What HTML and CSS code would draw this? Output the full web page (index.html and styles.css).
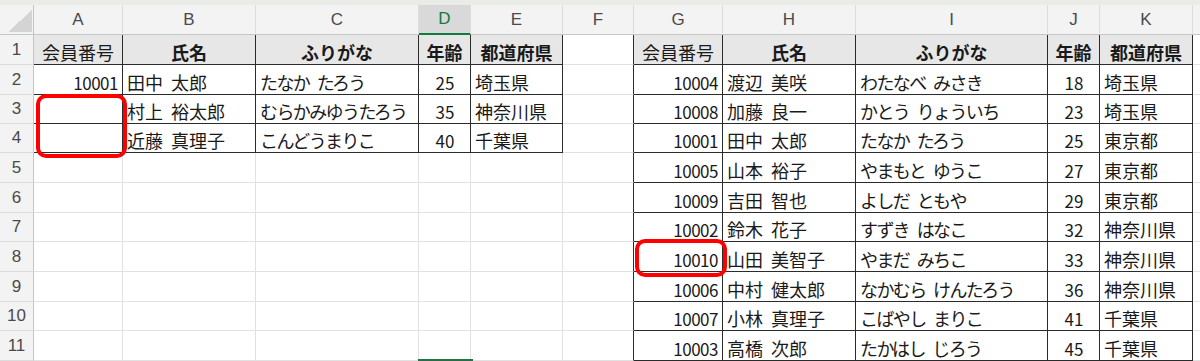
FILE: index.html
```html
<!DOCTYPE html>
<html lang="ja">
<head>
<meta charset="utf-8">
<title>Sheet</title>
<link rel="stylesheet" href="styles.css">
</head>
<body>
<div class="app">
  <div class="strip"></div>
  <div class="sheet">
    <div class="corner"><span class="tri"></span></div>
    <div class="ch">A</div><div class="ch">B</div><div class="ch">C</div><div class="ch sel">D</div><div class="ch">E</div><div class="ch">F</div><div class="ch">G</div><div class="ch">H</div><div class="ch">I</div><div class="ch">J</div><div class="ch">K</div><div class="ch end"></div>

    <div class="rh">1</div>
    <div class="c t th">会員番号</div><div class="c t th b">氏名</div><div class="c t th b">ふりがな</div><div class="c t th b">年齢</div><div class="c t th b">都道府県</div>
    <div class="c lb"></div>
    <div class="c t th">会員番号</div><div class="c t th b">氏名</div><div class="c t th b">ふりがな</div><div class="c t th b">年齢</div><div class="c t th b">都道府県</div>
    <div class="c end"></div>

    <div class="rh">2</div>
    <div class="c t num">10001</div><div class="c t">田中 太郎</div><div class="c t k">たなか たろう</div><div class="c t ctr">25</div><div class="c t">埼玉県</div>
    <div class="c lb"></div>
    <div class="c t num">10004</div><div class="c t">渡辺 美咲</div><div class="c t k">わたなべ みさき</div><div class="c t ctr">18</div><div class="c t">埼玉県</div>
    <div class="c end"></div>

    <div class="rh">3</div>
    <div class="c t num"></div><div class="c t">村上 裕太郎</div><div class="c t k">むらかみゆうたろう</div><div class="c t ctr">35</div><div class="c t">神奈川県</div>
    <div class="c lb"></div>
    <div class="c t num">10008</div><div class="c t">加藤 良一</div><div class="c t k">かとう りょういち</div><div class="c t ctr">23</div><div class="c t">埼玉県</div>
    <div class="c end"></div>

    <div class="rh">4</div>
    <div class="c t num"></div><div class="c t">近藤 真理子</div><div class="c t k">こんどうまりこ</div><div class="c t ctr">40</div><div class="c t">千葉県</div>
    <div class="c lb"></div>
    <div class="c t num">10001</div><div class="c t">田中 太郎</div><div class="c t k">たなか たろう</div><div class="c t ctr">25</div><div class="c t">東京都</div>
    <div class="c end"></div>

    <div class="rh">5</div>
    <div class="c"></div><div class="c"></div><div class="c"></div><div class="c"></div><div class="c"></div>
    <div class="c lb"></div>
    <div class="c t num">10005</div><div class="c t">山本 裕子</div><div class="c t k">やまもと ゆうこ</div><div class="c t ctr">27</div><div class="c t">東京都</div>
    <div class="c end"></div>

    <div class="rh">6</div>
    <div class="c"></div><div class="c"></div><div class="c"></div><div class="c"></div><div class="c"></div>
    <div class="c lb"></div>
    <div class="c t num">10009</div><div class="c t">吉田 智也</div><div class="c t k">よしだ ともや</div><div class="c t ctr">29</div><div class="c t">東京都</div>
    <div class="c end"></div>

    <div class="rh">7</div>
    <div class="c"></div><div class="c"></div><div class="c"></div><div class="c"></div><div class="c"></div>
    <div class="c lb"></div>
    <div class="c t num">10002</div><div class="c t">鈴木 花子</div><div class="c t k">すずき はなこ</div><div class="c t ctr">32</div><div class="c t">神奈川県</div>
    <div class="c end"></div>

    <div class="rh">8</div>
    <div class="c"></div><div class="c"></div><div class="c"></div><div class="c"></div><div class="c"></div>
    <div class="c lb"></div>
    <div class="c t num">10010</div><div class="c t">山田 美智子</div><div class="c t k">やまだ みちこ</div><div class="c t ctr">33</div><div class="c t">神奈川県</div>
    <div class="c end"></div>

    <div class="rh">9</div>
    <div class="c"></div><div class="c"></div><div class="c"></div><div class="c"></div><div class="c"></div>
    <div class="c lb"></div>
    <div class="c t num">10006</div><div class="c t">中村 健太郎</div><div class="c t k">なかむら けんたろう</div><div class="c t ctr">36</div><div class="c t">神奈川県</div>
    <div class="c end"></div>

    <div class="rh">10</div>
    <div class="c"></div><div class="c"></div><div class="c"></div><div class="c"></div><div class="c"></div>
    <div class="c lb"></div>
    <div class="c t num">10007</div><div class="c t">小林 真理子</div><div class="c t k">こばやし まりこ</div><div class="c t ctr">41</div><div class="c t">千葉県</div>
    <div class="c end"></div>

    <div class="rh">11</div>
    <div class="c"></div><div class="c"></div><div class="c"></div><div class="c"></div><div class="c"></div>
    <div class="c lb"></div>
    <div class="c t num">10003</div><div class="c t">高橋 次郎</div><div class="c t k">たかはし じろう</div><div class="c t ctr">45</div><div class="c t">千葉県</div>
    <div class="c end"></div>
  </div>
  <div class="mark mark-a"></div>
  <div class="mark mark-b"></div>
  <div class="active-edge"></div>
</div>
</body>
</html>
```
FILE: styles.css
```css
html, body {
  margin: 0;
  padding: 0;
  background: #ffffff;
}
body {
  font-family: "Noto Sans CJK JP", "Noto Sans", sans-serif;
  color: #1a1a1a;
  overflow: hidden;
}
.app {
  position: relative;
  width: 1200px;
  height: 361px;
  overflow: hidden;
}
.strip {
  height: 5px;
  background: #e9ece7;
}
.sheet {
  display: grid;
  grid-template-columns: 34px 89px 133px 163px 52px 92px 71px 89px 133px 192px 52px 93px 1fr;
  grid-template-rows: 30px 30px 30px 29px 29px 30px 30px 29px 30px 30px 29px 30px;
}
.corner {
  box-sizing: border-box;
  background: #f3f3f3;
  border-right: 1px solid #c6c6c6;
  border-bottom: 1px solid #c6c6c6;
  display: flex;
  justify-content: flex-end;
  align-items: flex-end;
  padding: 0 1px 2px 0;
}
.tri {
  width: 24px;
  height: 22px;
  background: linear-gradient(to bottom right, transparent 50%, #d4d4d4 50%);
}
.ch {
  box-sizing: border-box;
  background: #f3f3f3;
  border-right: 1px solid #dcdcdc;
  border-bottom: 1px solid #c6c6c6;
  display: flex;
  justify-content: center;
  align-items: center;
  font-family: "Liberation Sans", Arial, sans-serif;
  font-size: 17px;
  color: #4a4a4a;
}
.ch.sel {
  background: #d9d9d9;
  color: #107c41;
  border-bottom: 2px solid #107c41;
}
.ch.end {
  border-right: none;
}
.rh {
  box-sizing: border-box;
  background: #f3f3f3;
  border-right: 1px solid #c6c6c6;
  border-bottom: 1px solid #dcdcdc;
  display: flex;
  justify-content: center;
  align-items: center;
  font-family: "Liberation Sans", Arial, sans-serif;
  font-size: 17px;
  color: #4a4a4a;
}
.c {
  box-sizing: border-box;
  border-right: 1px solid #e1e1e1;
  border-bottom: 1px solid #e1e1e1;
  display: flex;
  align-items: flex-end;
  padding: 0 3px 3px 4px;
  font-size: 18px;
  line-height: 1;
  word-spacing: 4px;
  white-space: nowrap;
  overflow: hidden;
  color: #1a1a1a;
}
.c.end {
  border-right: none;
}
.c.t {
  border-right-color: #2b2b2b;
  border-bottom-color: #2b2b2b;
}
.c.lb {
  border-right-color: #2b2b2b;
}
.c.th {
  background: #e7e7e7;
  justify-content: center;
  padding-left: 2px;
  padding-right: 2px;
  word-spacing: 0;
}
.c.b {
  font-weight: bold;
}
.c.k {
  letter-spacing: -1.6px;
  word-spacing: 5px;
}
.c.num {
  justify-content: flex-end;
  padding-right: 4px;
  font-size: 17px;
  letter-spacing: -0.5px;
}
.c.ctr {
  justify-content: center;
  font-size: 17px;
}
.mark {
  position: absolute;
  box-sizing: border-box;
  border: 4px solid #ff0000;
  border-radius: 10px;
}
.mark-a {
  left: 36px;
  top: 94px;
  width: 91px;
  height: 64px;
}
.mark-b {
  left: 635px;
  top: 239px;
  width: 92px;
  height: 38px;
}
.active-edge {
  position: absolute;
  left: 418px;
  top: 359px;
  width: 55px;
  height: 2px;
  background: #217346;
}
```
